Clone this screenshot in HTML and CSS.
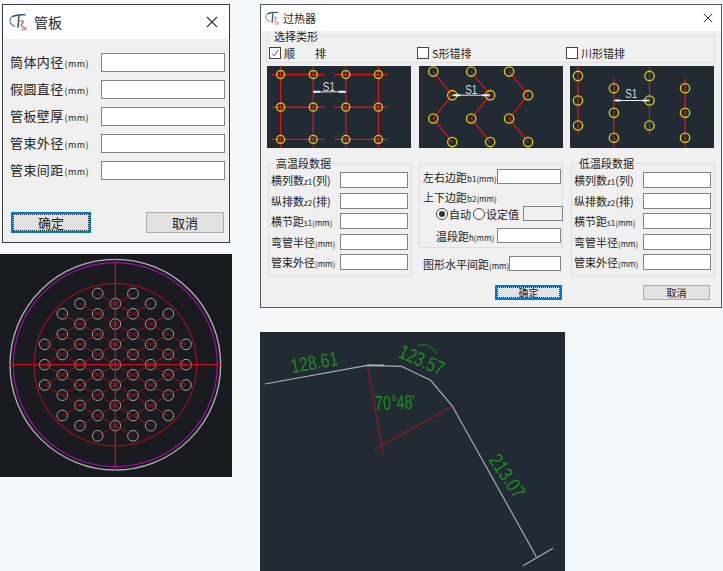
FILE: index.html
```html
<!DOCTYPE html>
<html lang="zh-CN">
<head>
  <meta charset="UTF-8">
  <meta name="viewport" content="width=device-width, initial-scale=1.0">
  <title>管板 / 过热器</title>
  <link rel="stylesheet" href="styles.css">
</head>
<body>
  <div class="page">

    <div class="col-left">
      <!-- 管板 -->
      <div class="dialog dialog-plate">
        <div class="titlebar titlebar-large">
          <svg class="logo logo-large" viewBox="0 0 20 20">
            <g id="logo-mark" fill="none" stroke-linecap="round">
              <path d="M8 2.5C3.5 2.5 1 5 1 8c0 3 2 5 5 6" stroke="#5f7fa8" stroke-width="1.3"/>
              <path d="M4 3.5C9 1.5 13 1.5 17 2" stroke="#34507c" stroke-width="1.5"/>
              <path d="M10.5 2.5L9.5 15" stroke="#34507c" stroke-width="1.6"/>
              <path d="M12 8.5C14.5 8 16 8.5 14.5 10.5L12.5 12.5L15 15.5L18 16" stroke="#d9534f" stroke-width="1.3"/>
              <path d="M13 17.5H18" stroke="#e58a86" stroke-width="1.3"/>
            </g>
          </svg>
          <span class="title-text">管板</span>
          <svg class="close close-large" viewBox="0 0 12 12"><path d="M1 1L11 11M11 1L1 11" stroke="#333" stroke-width="1.1"/></svg>
        </div>
        <div class="plate-body">
          <div class="plate-row"><label>筒体内径<span class="unit">(mm)</span></label><input class="field"></div>
          <div class="plate-row"><label>假圆直径<span class="unit">(mm)</span></label><input class="field"></div>
          <div class="plate-row"><label>管板壁厚<span class="unit">(mm)</span></label><input class="field"></div>
          <div class="plate-row"><label>管束外径<span class="unit">(mm)</span></label><input class="field"></div>
          <div class="plate-row"><label>管束间距<span class="unit">(mm)</span></label><input class="field"></div>
          <div class="plate-buttons">
            <button class="btn btn-default">确定</button>
            <button class="btn">取消</button>
          </div>
        </div>
      </div>

      <!-- 管板布置图 -->
      <svg class="cad cad-plate" viewBox="0 0 696 669">
        <defs>
          <g id="tube-col-3" class="tube"><circle cy="-61" r="16"/><circle cy="0" r="16"/><circle cy="61" r="16"/></g>
          <g id="tube-col-6" class="tube"><circle cy="-152.5" r="16"/><circle cy="-91.5" r="16"/><circle cy="-30.5" r="16"/><circle cy="30.5" r="16"/><circle cy="91.5" r="16"/><circle cy="152.5" r="16"/></g>
          <g id="tube-col-7" class="tube"><circle cy="-183" r="16"/><circle cy="-122" r="16"/><circle cy="-61" r="16"/><circle cy="0" r="16"/><circle cy="61" r="16"/><circle cy="122" r="16"/><circle cy="183" r="16"/></g>
          <g id="tube-col-8" class="tube"><circle cy="-213.5" r="16"/><circle cy="-152.5" r="16"/><circle cy="-91.5" r="16"/><circle cy="-30.5" r="16"/><circle cy="30.5" r="16"/><circle cy="91.5" r="16"/><circle cy="152.5" r="16"/><circle cy="213.5" r="16"/></g>
          <path id="lattice" d="M-53-213.5L212-61M-106-183L212 0M-159-152.5L212 61M-159-91.5L159 91.5M-212-61L159 152.5M-212 0L106 183M-212 61L53 213.5"/>
        </defs>
        <g transform="translate(346 332)">
          <circle class="ring-outer" r="316"/>
          <circle class="ring-purple" r="306"/>
          <circle class="ring-red" r="244"/>
          <use href="#tube-col-3" x="-212"/>
          <use href="#tube-col-6" x="-159"/>
          <use href="#tube-col-7" x="-106"/>
          <use href="#tube-col-8" x="-53"/>
          <use href="#tube-col-7" x="0"/>
          <use href="#tube-col-8" x="53"/>
          <use href="#tube-col-7" x="106"/>
          <use href="#tube-col-6" x="159"/>
          <use href="#tube-col-3" x="212"/>
          <g class="lattice">
            <use href="#lattice"/>
            <use href="#lattice" transform="scale(-1 1)"/>
          </g>
          <path class="axis" d="M-318 0H318M0-318V318"/>
        </g>
      </svg>
    </div>

    <div class="col-right">
      <!-- 过热器 -->
      <div class="dialog dialog-heater">
        <div class="titlebar titlebar-small">
          <svg class="logo logo-small" viewBox="0 0 20 20"><use href="#logo-mark"/></svg>
          <span class="title-text-small">过热器</span>
          <svg class="close close-small" viewBox="0 0 12 12"><path d="M1 1L11 11M11 1L1 11" stroke="#333" stroke-width="1.2"/></svg>
        </div>
        <div class="heater-body">
          <fieldset class="group type-group">
            <legend>选择类形</legend>
            <div class="type-grid">
              <label class="check"><span class="box checked"><svg viewBox="0 0 12 12"><path d="M2 6.5L5 9.5L10 2.5" fill="none" stroke="#333" stroke-width="1"/></svg></span><span class="check-wide"><span>顺</span><span>排</span></span></label>
              <label class="check"><span class="box"></span>S形错排</label>
              <label class="check"><span class="box"></span>川形错排</label>
            </div>
          </fieldset>

          <div class="pic-grid">
            <svg class="pic" viewBox="0 0 433 245">
              <path class="pic-red" d="M15 25H173M203 25H363M15 123H173M203 123H363M15 220H173M203 220H363M41 0V245M139 0V245M237 0V245M335 0V245"/>
              <g class="pic-yellow"><circle cx="41" cy="25" r="12"/><circle cx="139" cy="25" r="12"/><circle cx="237" cy="25" r="12"/><circle cx="335" cy="25" r="12"/><circle cx="41" cy="123" r="12"/><circle cx="139" cy="123" r="12"/><circle cx="237" cy="123" r="12"/><circle cx="335" cy="123" r="12"/><circle cx="41" cy="220" r="12"/><circle cx="139" cy="220" r="12"/><circle cx="237" cy="220" r="12"/><circle cx="335" cy="220" r="12"/></g>
              <path class="pic-dim" d="M138 77H238"/><path class="pic-arrow" d="M140 77H160M216 77H236"/>
              <text class="pic-text" x="186" y="73" text-anchor="middle" textLength="36" lengthAdjust="spacingAndGlyphs">S1</text>
            </svg>
            <svg class="pic" viewBox="0 0 433 245">
              <path class="pic-red" d="M43 16L100 87L43 157L100 228M157 16L214 87L157 157L214 228M271 16L328 87L271 157L328 228"/>
              <g class="pic-yellow"><circle cx="43" cy="16" r="14"/><circle cx="157" cy="16" r="14"/><circle cx="271" cy="16" r="14"/><circle cx="100" cy="87" r="14"/><circle cx="214" cy="87" r="14"/><circle cx="328" cy="87" r="14"/><circle cx="43" cy="157" r="14"/><circle cx="157" cy="157" r="14"/><circle cx="271" cy="157" r="14"/><circle cx="100" cy="228" r="14"/><circle cx="214" cy="228" r="14"/><circle cx="328" cy="228" r="14"/></g>
              <path class="pic-dim" d="M100 87H214"/><path class="pic-arrow" d="M104 87H124M190 87H210"/>
              <text class="pic-text" x="157" y="82" text-anchor="middle" textLength="36" lengthAdjust="spacingAndGlyphs">S1</text>
            </svg>
            <svg class="pic" viewBox="0 0 433 245">
              <path class="pic-red" d="M24 0V205M132 37V245M239 0V205M346 37V245"/>
              <g class="pic-yellow"><circle cx="24" cy="29" r="14"/><circle cx="24" cy="103" r="14"/><circle cx="24" cy="178" r="14"/><circle cx="132" cy="66" r="14"/><circle cx="132" cy="140" r="14"/><circle cx="132" cy="215" r="14"/><circle cx="239" cy="29" r="14"/><circle cx="239" cy="103" r="14"/><circle cx="239" cy="178" r="14"/><circle cx="346" cy="66" r="14"/><circle cx="346" cy="140" r="14"/><circle cx="346" cy="215" r="14"/></g>
              <path class="pic-dim" d="M132 103H239"/><path class="pic-arrow" d="M136 103H152M218 103H236"/>
              <text class="pic-text" x="184" y="96" text-anchor="middle" textLength="36" lengthAdjust="spacingAndGlyphs">S1</text>
            </svg>
          </div>

          <div class="data-grid">
            <fieldset class="group data-group">
              <legend>高温段数据</legend>
              <div class="data-row"><label>横列数<span class="unit">z1</span>(列)</label><input class="field"></div>
              <div class="data-row"><label>纵排数<span class="unit">z2</span>(排)</label><input class="field"></div>
              <div class="data-row"><label>横节距<span class="unit">s1(mm)</span></label><input class="field"></div>
              <div class="data-row"><label>弯管半径<span class="unit">(mm)</span></label><input class="field"></div>
              <div class="data-row"><label>管束外径<span class="unit">(mm)</span></label><input class="field"></div>
            </fieldset>

            <div class="mid-col">
              <div class="mid-box">
                <div class="mid-row"><label>左右边距<span class="unit">b1(mm)</span></label><input class="field"></div>
                <div class="mid-row mid-row-text"><label>上下边距<span class="unit">b2(mm)</span></label></div>
                <div class="mid-row mid-row-radio">
                  <span class="radio radio-on"></span><span class="radio-label">自动</span>
                  <span class="radio"></span><span class="radio-label">设定值</span>
                  <input class="field field-off" disabled>
                </div>
                <div class="mid-row mid-row-gap"><label>温段距<span class="unit">h(mm)</span></label><input class="field"></div>
              </div>
              <div class="mid-row mid-row-outer"><label>图形水平间距<span class="unit">(mm)</span></label><input class="field"></div>
            </div>

            <fieldset class="group data-group">
              <legend>低温段数据</legend>
              <div class="data-row"><label>横列数<span class="unit">z1</span>(列)</label><input class="field"></div>
              <div class="data-row"><label>纵排数<span class="unit">z2</span>(排)</label><input class="field"></div>
              <div class="data-row"><label>横节距<span class="unit">s1(mm)</span></label><input class="field"></div>
              <div class="data-row"><label>弯管半径<span class="unit">(mm)</span></label><input class="field"></div>
              <div class="data-row"><label>管束外径<span class="unit">(mm)</span></label><input class="field"></div>
            </fieldset>
          </div>

          <div class="heater-buttons">
            <button class="btn btn-small btn-default btn-ok">确定</button>
            <button class="btn btn-small btn-cancel">取消</button>
          </div>
        </div>
      </div>

      <!-- 弯管标注图 -->
      <svg class="cad cad-bend" viewBox="6 6 915 717">
        <path class="bend-red" d="M328 106L375 370M350 358L585 228"/>
        <path class="bend-line" d="M20 162L328 106L430 109L518 151L583 228L835 680M795 707L885 655"/>
        <path class="bend-thick" d="M328 106H378"/>
        <path class="bend-arc" d="M478 46Q522 36 537 75"/>
        <text class="bend-text" transform="translate(102 130) rotate(-10)" textLength="143" lengthAdjust="spacingAndGlyphs">128.61</text>
        <text class="bend-text" transform="translate(418 80) rotate(24)" textLength="142" lengthAdjust="spacingAndGlyphs">123.57</text>
        <text class="bend-text" transform="translate(352 240) rotate(-2)" textLength="120" lengthAdjust="spacingAndGlyphs">70°48'</text>
        <text class="bend-text" transform="translate(690 390) rotate(56)" textLength="144" lengthAdjust="spacingAndGlyphs">213.07</text>
      </svg>
    </div>

  </div>
</body>
</html>
```
FILE: styles.css
```css
body {
  margin: 0;
  background-color: #f6f7f9;
  color: #222;
  font-family: "Noto Sans CJK SC", "Liberation Sans", sans-serif;
  font-size: 13px;
}
label {
  white-space: nowrap;
}
.page {
  display: flex;
  width: 723px;
  height: 571px;
  overflow: hidden;
}
.col-left {
  width: 260px;
  flex-shrink: 0;
  padding-top: 4px;
}
.col-right {
  flex: 1;
  padding-top: 4px;
}
.dialog {
  box-sizing: border-box;
  background-color: #f0f0f0;
  border: 1px solid #3c3c3c;
}
.dialog-plate {
  width: 228px;
  height: 239px;
  margin-left: 2px;
  display: flex;
  flex-direction: column;
}
.dialog-heater {
  width: 462px;
  height: 304px;
  border-color: #555;
}
.cad {
  display: block;
}
.cad-plate {
  width: 232px;
  height: 223px;
  margin-top: 11px;
  background-color: #1a1b20;
}
.cad-bend {
  width: 305px;
  height: 239px;
  margin-top: 24px;
  background-color: #222a33;
}

/* title bars */
.titlebar {
  display: flex;
  align-items: center;
  background-color: #fff;
}
.titlebar-large {
  height: 34px;
  padding: 0 9px 0 6px;
}
.titlebar-small {
  height: 26px;
  padding: 0 8px 0 4px;
}
.logo-large {
  width: 19px;
  height: 19px;
  margin-right: 6px;
}
.logo-small {
  width: 15px;
  height: 15px;
  margin-right: 3px;
}
.title-text {
  font-size: 14px;
}
.title-text-small {
  font-size: 11px;
}
.close {
  margin-left: auto;
}
.close-large {
  width: 12px;
  height: 12px;
  margin-right: 2px;
}
.close-small {
  width: 10px;
  height: 10px;
}

/* form controls */
.field {
  box-sizing: border-box;
  flex-shrink: 0;
  margin: 0;
  padding: 0;
  background-color: #fff;
  border: 1px solid #828282;
  border-radius: 0;
  outline: none;
}
.field-off {
  background-color: #f0f0f0;
}
.unit {
  font-size: 9px;
  margin: 0 1px;
}
.btn {
  box-sizing: border-box;
  width: 78px;
  height: 21px;
  padding: 0;
  background-color: #e1e1e1;
  border: 1px solid #adadad;
  color: #222;
  font-family: inherit;
  font-size: 13px;
  line-height: 1;
}
.btn-default {
  border: 2px solid #0078d7;
  outline: 1px dotted #222;
  outline-offset: -3px;
}
.btn-small {
  width: 67px;
  height: 15px;
  font-size: 10px;
}

/* 管板 */
.plate-body {
  flex: 1;
  display: flex;
  flex-direction: column;
  gap: 8px;
  padding: 14px 4px 9px 7px;
}
.plate-row {
  display: flex;
  justify-content: space-between;
  align-items: center;
  height: 19px;
}
.plate-row label {
  margin-top: -2px;
  letter-spacing: 0.4px;
}
.plate-row .field {
  width: 124px;
  height: 19px;
}
.plate-buttons {
  display: flex;
  justify-content: space-between;
  margin-top: auto;
  padding: 0 1px;
}
.plate-buttons .btn-default {
  width: 80px;
}

/* 过热器 */
.heater-body {
  padding: 0 6px;
  font-size: 11px;
}
.heater-body .unit {
  font-size: 8px;
  margin: 0;
}
.group {
  margin: 0;
  min-width: 0;
  border: 1px solid #dfdfdf;
}
.group legend {
  padding: 0 2px;
  margin-left: 3px;
  line-height: 14px;
  font-size: 11px;
}
.type-group {
  margin: -2px 0 0 -1px;
  padding: 4px 0 3px 2px;
}
.type-grid {
  display: grid;
  grid-template-columns: 148px 149px auto;
}
.pic-grid,
.data-grid {
  display: grid;
  grid-template-columns: 152px 151px 144px;
}
.check {
  display: flex;
  align-items: center;
  height: 12px;
  font-size: 11px;
}
.box {
  box-sizing: border-box;
  flex-shrink: 0;
  width: 12px;
  height: 12px;
  margin-right: 3px;
  background-color: #fff;
  border: 1px solid #444;
}
.box svg {
  display: block;
  width: 10px;
  height: 10px;
}
.check-wide {
  display: flex;
  gap: 20px;
}
.pic-grid {
  margin-top: 3px;
}
.pic {
  display: block;
  width: 144px;
  height: 82px;
  background-color: #222a33;
}
.pic-red {
  fill: none;
  stroke: #e81414;
  stroke-width: 3.5;
}
.pic-yellow {
  fill: none;
  stroke: #d8cf10;
  stroke-width: 4;
}
.pic-dim {
  stroke: #eee;
  stroke-width: 3;
}
.pic-arrow {
  stroke: #eee;
  stroke-width: 6;
}
.pic-text {
  fill: #ddd;
  font-family: "Liberation Sans", sans-serif;
  font-size: 38px;
}
.data-grid {
  margin-top: 8px;
}
.data-group {
  box-sizing: border-box;
  width: 144px;
  height: 121px;
  margin-left: 1px;
  padding: 2px 3px 0 2px;
}
.data-row {
  display: flex;
  justify-content: space-between;
  align-items: center;
  height: 16px;
  margin-bottom: 4.5px;
}
.data-row .field {
  width: 68px;
  height: 16px;
}
.mid-col {
  width: 144px;
  margin-top: 7px;
}
.mid-box {
  box-sizing: border-box;
  height: 85px;
  padding: 5px 1px 0 3px;
  border: 1px solid #dfdfdf;
}
.mid-row {
  display: flex;
  justify-content: space-between;
  align-items: center;
  height: 15px;
}
.mid-row .field {
  width: 64px;
  height: 15px;
}
.mid-row-text {
  margin-top: 5px;
}
.mid-row-radio {
  justify-content: flex-start;
  margin-top: 2px;
  padding-left: 13px;
}
.mid-row .field-off {
  width: 40px;
  margin-left: 2px;
}
.mid-row-gap {
  margin-top: 7px;
  padding-left: 13px;
}
.mid-row-outer {
  margin-top: 8px;
  padding: 0 2px 0 4px;
}
.mid-row-outer .field {
  width: 52px;
}
.radio {
  box-sizing: border-box;
  position: relative;
  flex-shrink: 0;
  width: 12px;
  height: 12px;
  margin-right: 1px;
  background-color: #fff;
  border: 1px solid #444;
  border-radius: 50%;
}
.radio-on::after {
  content: "";
  position: absolute;
  left: 2px;
  top: 2px;
  width: 6px;
  height: 6px;
  background-color: #333;
  border-radius: 50%;
}
.radio-label {
  flex-shrink: 0;
  font-size: 11px;
  margin-right: 2px;
}
.heater-buttons {
  display: grid;
  grid-template-columns: 303px 144px;
  margin-top: 8px;
}
.btn-ok {
  justify-self: end;
  margin-right: 8px;
}
.btn-cancel {
  justify-self: end;
  margin-right: 4px;
}

/* 管板布置图 */
.tube {
  fill: none;
  stroke: #a0a0a0;
  stroke-width: 3;
}
.ring-outer {
  fill: none;
  stroke: #b0b0b0;
  stroke-width: 4;
}
.ring-purple {
  fill: none;
  stroke: #a010a8;
  stroke-width: 3.5;
}
.ring-red {
  fill: none;
  stroke: #a01018;
  stroke-width: 3.5;
}
.lattice {
  fill: none;
  stroke: #9a1016;
  stroke-width: 3;
}
.axis {
  fill: none;
  stroke: #c81418;
  stroke-width: 3.5;
}

/* 弯管标注图 */
.bend-line {
  fill: none;
  stroke: #aab0b4;
  stroke-width: 3.5;
}
.bend-thick {
  fill: none;
  stroke: #b0b4b8;
  stroke-width: 5;
}
.bend-red {
  fill: none;
  stroke: #8e1a25;
  stroke-width: 3.5;
}
.bend-arc {
  fill: none;
  stroke: #1e9a1e;
  stroke-width: 2.5;
}
.bend-text {
  fill: #1a8f1a;
  font-family: "Liberation Sans", sans-serif;
  font-size: 60px;
}
```
